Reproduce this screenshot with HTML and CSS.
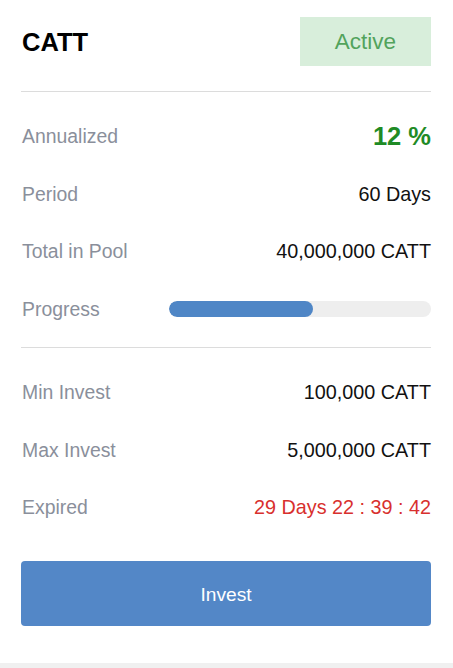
FILE: index.html
```html
<!DOCTYPE html>
<html>
<head>
<meta charset="utf-8">
<link rel="stylesheet" href="styles.css">
</head>
<body>
<div class="card">
  <div class="header">
    <div class="title">CATT</div>
    <div class="badge">Active</div>
  </div>
  <div class="divider"></div>
  <div class="section first">
    <div class="row"><span class="label">Annualized</span><span class="value rate">12 %</span></div>
    <div class="row"><span class="label">Period</span><span class="value">60 Days</span></div>
    <div class="row"><span class="label">Total in Pool</span><span class="value">40,000,000 CATT</span></div>
    <div class="row"><span class="label">Progress</span><div class="bar"><div class="fill" style="width:55%"></div></div></div>
  </div>
  <div class="divider"></div>
  <div class="section second">
    <div class="row"><span class="label">Min Invest</span><span class="value">100,000 CATT</span></div>
    <div class="row"><span class="label">Max Invest</span><span class="value">5,000,000 CATT</span></div>
    <div class="row"><span class="label">Expired</span><span class="value expired">29 Days 22 : 39 : 42</span></div>
  </div>
  <button class="invest">Invest</button>
</div>
</body>
</html>
```
FILE: styles.css
```css
html, body {
  margin: 0;
  padding: 0;
  background: #f0f0f0;
  font-family: "Liberation Sans", Arial, sans-serif;
}
.card {
  background: #fff;
  height: 663px;
  box-sizing: border-box;
  padding: 17px 22px 0 21px;
}
.header {
  display: flex;
  justify-content: space-between;
  align-items: center;
  height: 49px;
}
.title {
  font-size: 25.5px;
  font-weight: bold;
  color: #000;
  padding-left: 1px;
  padding-top: 1px;
}
.badge {
  width: 131px;
  height: 49px;
  background: #d8eedb;
  color: #52a35c;
  font-size: 22.5px;
  display: flex;
  align-items: center;
  justify-content: center;
}
.divider {
  height: 1px;
  background: #dcdcdc;
  margin-top: 25px;
}
.section.first {
  padding-top: 15.25px;
  padding-bottom: 9.75px;
}
.section.first + .divider {
  margin-top: 0;
}
.section.second {
  padding-top: 15.25px;
}
.row {
  height: 57.5px;
  display: flex;
  justify-content: space-between;
  align-items: center;
  padding-top: 1px;
  box-sizing: border-box;
}
.label {
  font-size: 19.4px;
  color: #8a8f9b;
  padding-left: 1px;
}
.value {
  font-size: 19.8px;
  color: #111;
}
.rate {
  font-size: 25.5px;
  font-weight: bold;
  color: #1f8b25;
}
.expired {
  color: #d8302e;
}
.bar {
  width: 262px;
  height: 16px;
  border-radius: 8px;
  background: #eeeeee;
  overflow: hidden;
}
.fill {
  height: 100%;
  background: #4f86c6;
  border-radius: 8px;
}
.invest {
  display: block;
  width: 100%;
  height: 65px;
  margin-top: 25px;
  padding: 3px 0 0;
  border: none;
  border-radius: 4px;
  background: #5387c7;
  color: #fff;
  font-family: "Liberation Sans", Arial, sans-serif;
  font-size: 19.2px;
}
```
